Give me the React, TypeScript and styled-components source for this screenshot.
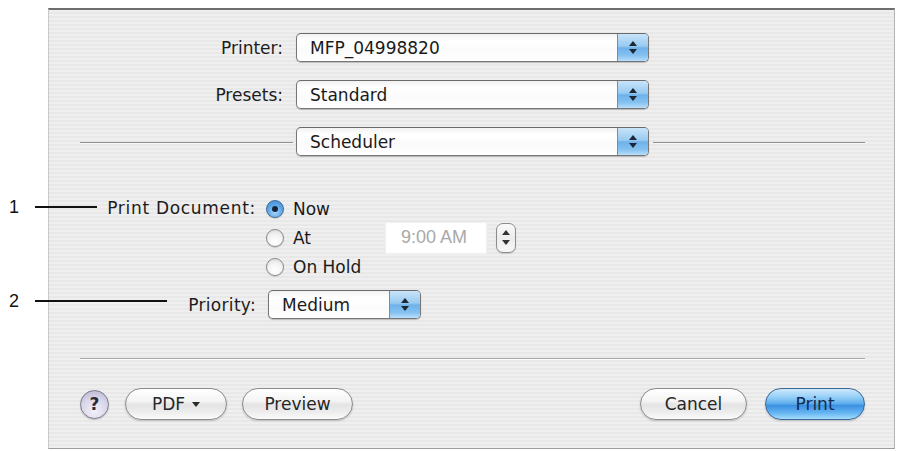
import React from "react";
import styled, { createGlobalStyle } from "styled-components";

const Global = createGlobalStyle`
  html, body {
    margin: 0;
    padding: 0;
    background: #ffffff;
  }
  body {
    font-family: "DejaVu Sans", "Verdana", sans-serif;
    font-size: 17px;
    color: #1a1a1a;
  }
`;

const Page = styled.div`
  position: relative;
  width: 898px;
  height: 451px;
  padding: 8px 3px 2px 48px;
  box-sizing: border-box;
  overflow: hidden;
`;

const Dialog = styled.div`
  box-sizing: border-box;
  width: 847px;
  height: 441px;
  display: flex;
  flex-direction: column;
  padding: 23px 29px 28px 31px;
  border-top: 2px solid #6e6e6e;
  border-left: 1px solid #c9c9c9;
  border-right: 1px solid #b4b4b4;
  border-bottom: 1px solid #9d9d9d;
  background: repeating-linear-gradient(
    to bottom,
    #efefef 0px,
    #efefef 2px,
    #e8e8e8 2px,
    #e8e8e8 4px
  );
`;

const TopGrid = styled.div`
  display: grid;
  grid-template-columns: 1fr 353px 1fr;
  row-gap: 18px;
  align-items: center;
`;

const FieldLabel = styled.span`
  justify-self: end;
  margin-right: 13px;
  font-size: 17px;
  color: #1c1c1c;
  white-space: nowrap;
`;

const Rule = styled.div<{ $side: "left" | "right" }>`
  height: 1px;
  background: #8e8e8e;
  box-shadow: 0 1px 0 #f8f8f8;
  margin-top: 1px;
  ${(p) => (p.$side === "left" ? "margin-right: 3px;" : "margin-left: 4px;")}
`;

const Popup = styled.div<{ $w?: number }>`
  box-sizing: border-box;
  display: flex;
  height: 29px;
  width: ${(p) => (p.$w ? `${p.$w}px` : "100%")};
  border: 1px solid #767676;
  border-top-color: #6a6a6a;
  border-radius: 5px;
  overflow: hidden;
  box-shadow: 0 1px 1px rgba(0, 0, 0, 0.22);
  background: linear-gradient(#f2f2f2 0%, #ffffff 25%, #fbfbfb 60%, #ffffff 100%);
`;

const PopupText = styled.span`
  flex: 1;
  display: flex;
  align-items: center;
  padding-left: 13px;
  font-size: 17px;
  color: #1a1a1a;
  white-space: nowrap;
`;

const PopupArrows = styled.span`
  width: 30px;
  display: flex;
  flex-direction: column;
  align-items: center;
  justify-content: center;
  gap: 3px;
  border-left: 1px solid #6f8fb0;
  background: linear-gradient(
    #c8e4f9 0%,
    #98caf1 45%,
    #6eb1ea 52%,
    #86c2f0 80%,
    #b8defa 100%
  );
`;

const Tri = ({ up, color = "#1b2835" }: { up?: boolean; color?: string }) => (
  <svg width="8" height="5" viewBox="0 0 8 5">
    <polygon points={up ? "4,0 8,5 0,5" : "0,0 8,0 4,5"} fill={color} />
  </svg>
);

const SelectBox = ({ value, width }: { value: string; width?: number }) => (
  <Popup $w={width}>
    <PopupText>{value}</PopupText>
    <PopupArrows>
      <Tri up />
      <Tri />
    </PopupArrows>
  </Popup>
);

const Form = styled.div`
  display: grid;
  grid-template-columns: 176px auto;
  column-gap: 10px;
  margin-top: 38px;
  align-items: center;
  justify-content: start;
`;

const FormLabel = styled.span`
  justify-self: end;
  font-size: 17px;
  color: #1c1c1c;
  white-space: nowrap;
  letter-spacing: 0.7px;
`;

const DocLabel = styled(FormLabel)`
  align-self: start;
  margin-top: 4px;
`;

const RadioGroup = styled.div`
  display: flex;
  flex-direction: column;
`;

const RadioRow = styled.label`
  display: flex;
  align-items: center;
  height: 29px;
  font-size: 17px;
  color: #1a1a1a;
`;

const RadioDot = styled.span<{ $on?: boolean }>`
  box-sizing: border-box;
  width: 18px;
  height: 18px;
  border-radius: 50%;
  margin-right: 9px;
  flex: none;
  display: flex;
  align-items: center;
  justify-content: center;
  border: 1px solid ${(p) => (p.$on ? "#3d6c9c" : "#8a8a8a")};
  background: ${(p) =>
    p.$on
      ? "radial-gradient(circle at 50% 70%, #a7d6fa 0%, #5aa4e6 55%, #3f86cf 100%)"
      : "radial-gradient(circle at 50% 75%, #ffffff 0%, #f4f4f4 50%, #d6d6d6 100%)"};
  box-shadow: 0 1px 1px rgba(0, 0, 0, 0.15);
  &::after {
    content: "";
    display: ${(p) => (p.$on ? "block" : "none")};
    width: 6px;
    height: 6px;
    border-radius: 50%;
    background: #15243a;
  }
`;

const RadioText = styled.span`
  width: 92px;
`;

const TimeField = styled.span`
  box-sizing: border-box;
  width: 102px;
  height: 32px;
  margin: -2px 0;
  display: flex;
  align-items: center;
  padding-left: 15px;
  background: #ffffff;
  border: 1px solid #f0f0f0;
  color: #a8a8a8;
  font-family: "Liberation Sans", "Arial", sans-serif;
  font-size: 18px;
  white-space: nowrap;
`;

const Stepper = styled.span`
  box-sizing: border-box;
  width: 20px;
  height: 30px;
  margin-left: 9px;
  border: 1px solid #8c8c8c;
  border-radius: 7px;
  display: flex;
  flex-direction: column;
  align-items: center;
  justify-content: center;
  gap: 5px;
  background: linear-gradient(#fafafa, #ececec 50%, #f7f7f7);
  box-shadow: 0 1px 1px rgba(0, 0, 0, 0.15);
`;

const PriorityCell = styled.div`
  margin-top: 9px;
  margin-left: 2px;
`;

const PriorityLabel = styled(FormLabel)`
  margin-top: 9px;
  letter-spacing: 0.3px;
`;

const Separator = styled.div`
  height: 1px;
  margin-top: 39px;
  background: #a9a9a9;
  box-shadow: 0 1px 0 #fafafa;
`;

const ButtonBar = styled.div`
  display: flex;
  align-items: center;
  margin-top: 29px;
  height: 32px;
`;

const HelpButton = styled.span`
  box-sizing: border-box;
  width: 29px;
  height: 29px;
  border-radius: 50%;
  border: 1px solid #7a7a8a;
  display: flex;
  align-items: center;
  justify-content: center;
  font-weight: bold;
  font-size: 17px;
  color: #2a2a35;
  background: radial-gradient(circle at 50% 75%, #f2f0fa 0%, #d9d5ea 55%, #b3aecb 100%);
  box-shadow: 0 1px 1px rgba(0, 0, 0, 0.2);
`;

const PillButton = styled.span<{ $w: number; $gap?: number; $primary?: boolean }>`
  box-sizing: border-box;
  width: ${(p) => p.$w}px;
  height: 32px;
  margin-left: ${(p) => p.$gap ?? 0}px;
  border-radius: 16px;
  display: flex;
  align-items: center;
  justify-content: center;
  gap: 7px;
  font-size: 17px;
  white-space: nowrap;
  border: 1px solid ${(p) => (p.$primary ? "#3a6796" : "#8b8b8b")};
  color: ${(p) => (p.$primary ? "#142a52" : "#262626")};
  background: ${(p) =>
    p.$primary
      ? "linear-gradient(#cfe9fc 0%, #8ecbf6 30%, #5aaaec 50%, #3b90e2 55%, #66b6f2 80%, #a6dcfc 100%)"
      : "linear-gradient(#ffffff 0%, #f4f4f4 40%, #e4e4e4 52%, #ececec 75%, #fbfbfb 100%)"};
  box-shadow: 0 1px 2px rgba(0, 0, 0, 0.2);
`;

const Push = styled.span`
  flex: 1;
`;

const Callout = styled.div<{ $top: number }>`
  position: absolute;
  left: 9px;
  top: ${(p) => p.$top}px;
  height: 20px;
  display: flex;
  align-items: center;
  font-family: "Liberation Sans", "Arial", sans-serif;
  font-size: 18px;
  color: #111;
`;

const CalloutLine = styled.span<{ $len: number }>`
  display: block;
  width: ${(p) => p.$len}px;
  height: 2px;
  margin-left: 16px;
  background: #111;
`;

export default function App() {
  return (
    <Page>
      <Global />
      <Dialog>
        <TopGrid>
          <FieldLabel>Printer:</FieldLabel>
          <SelectBox value="MFP_04998820" />
          <span />
          <FieldLabel>Presets:</FieldLabel>
          <SelectBox value="Standard" />
          <span />
          <Rule $side="left" />
          <SelectBox value="Scheduler" />
          <Rule $side="right" />
        </TopGrid>

        <Form>
          <DocLabel>Print Document:</DocLabel>
          <RadioGroup>
            <RadioRow>
              <RadioDot $on />
              <RadioText>Now</RadioText>
            </RadioRow>
            <RadioRow>
              <RadioDot />
              <RadioText>At</RadioText>
              <TimeField>9:00 AM</TimeField>
              <Stepper>
                <Tri up color="#333" />
                <Tri color="#333" />
              </Stepper>
            </RadioRow>
            <RadioRow>
              <RadioDot />
              <RadioText>On Hold</RadioText>
            </RadioRow>
          </RadioGroup>
          <PriorityLabel>Priority:</PriorityLabel>
          <PriorityCell>
            <SelectBox value="Medium" width={153} />
          </PriorityCell>
        </Form>

        <Separator />

        <ButtonBar>
          <HelpButton>?</HelpButton>
          <PillButton $w={102} $gap={16}>
            PDF
            <Tri color="#2a2a2a" />
          </PillButton>
          <PillButton $w={111} $gap={15}>Preview</PillButton>
          <Push />
          <PillButton $w={107}>Cancel</PillButton>
          <PillButton $w={100} $gap={18} $primary>
            Print
          </PillButton>
        </ButtonBar>
      </Dialog>

      <Callout $top={197}>
        1<CalloutLine $len={62} />
      </Callout>
      <Callout $top={291}>
        2<CalloutLine $len={132} />
      </Callout>
    </Page>
  );
}
